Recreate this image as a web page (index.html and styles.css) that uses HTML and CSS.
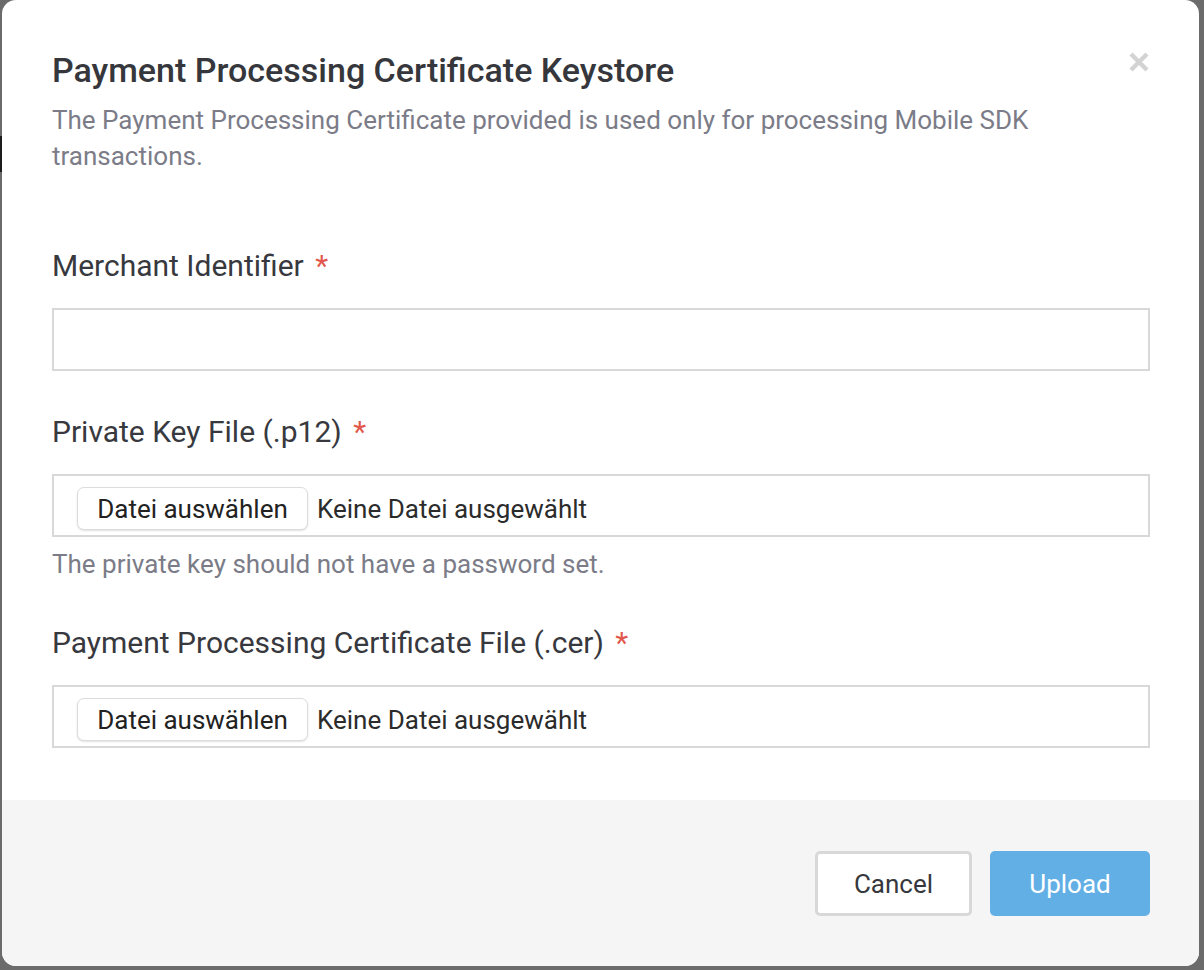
FILE: index.html
```html
<!DOCTYPE html>
<html lang="en">
<head>
<meta charset="utf-8">
<title>Payment Processing Certificate Keystore</title>
<link rel="stylesheet" href="styles.css">
</head>
<body>
<div class="backdrop-mark"></div>
<div class="modal">
  <div class="modal-body">
    <div class="modal-header">
      <div class="header-text">
        <h1 class="modal-title">Payment Processing Certificate Keystore</h1>
        <p class="modal-desc">The Payment Processing Certificate provided is used only for processing Mobile SDK transactions.</p>
      </div>
      <button class="close-btn" aria-label="Close">
        <svg width="22" height="22" viewBox="0 0 22 22"><path d="M3 3 L19 19 M19 3 L3 19" stroke="#d3d3d3" stroke-width="4.4" stroke-linecap="butt"/></svg>
      </button>
    </div>

    <div class="form-group first">
      <label class="field-label">Merchant Identifier <span class="req">*</span></label>
      <div class="input-box"></div>
    </div>

    <div class="form-group">
      <label class="field-label">Private Key File (.p12) <span class="req">*</span></label>
      <div class="input-box file-box">
        <span class="file-btn">Datei auswählen</span>
        <span class="file-name">Keine Datei ausgewählt</span>
      </div>
      <p class="help-text">The private key should not have a password set.</p>
    </div>

    <div class="form-group">
      <label class="field-label">Payment Processing Certificate File (.cer) <span class="req">*</span></label>
      <div class="input-box file-box">
        <span class="file-btn">Datei auswählen</span>
        <span class="file-name">Keine Datei ausgewählt</span>
      </div>
    </div>
  </div>
  <div class="modal-footer">
    <button class="btn btn-cancel">Cancel</button>
    <button class="btn btn-upload">Upload</button>
  </div>
</div>
</body>
</html>
```

FILE: styles.css
```css
html, body {
  margin: 0;
  padding: 0;
}
body {
  background: #6b6b6b;
  width: 1204px;
  height: 970px;
  overflow: hidden;
  position: relative;
  font-family: Roboto, "Liberation Sans", sans-serif;
}
.backdrop-mark {
  position: absolute;
  left: 0;
  top: 136px;
  width: 2px;
  height: 36px;
  background: #1c1c1c;
}
.modal {
  margin-left: 2px;
  width: 1197px;
  height: 966px;
  background: #fff;
  border-radius: 14px;
  display: flex;
  flex-direction: column;
  overflow: hidden;
}
.modal-body {
  padding: 50px 49px 0 50px;
  flex: 1;
}
.modal-header {
  display: flex;
  justify-content: space-between;
  align-items: flex-start;
}
.modal-title {
  margin: 0;
  font-size: 34px;
  font-weight: 500;
  color: #36373c;
  line-height: 40px;
}
.modal-desc {
  margin: 12px 0 0;
  font-size: 26px;
  line-height: 36px;
  color: #7b7c88;
  max-width: 1040px;
}
.close-btn {
  border: 0;
  background: none;
  padding: 0;
  margin: 1px 0 0 0;
  width: 22px;
  height: 22px;
  display: flex;
}
.form-group {
  margin-top: 43px;
}
.form-group.first {
  margin-top: 74px;
}
.field-label {
  display: block;
  font-size: 30px;
  line-height: 36px;
  color: #38393e;
  margin-bottom: 24px;
}
.req {
  color: #e2574c;
  margin-left: 4px;
}
.input-box {
  height: 63px;
  box-sizing: border-box;
  border: 2px solid #d8d8d8;
}
.file-box {
  display: flex;
  align-items: center;
  padding-left: 23px;
  padding-top: 6px;
}
.file-btn {
  box-sizing: border-box;
  height: 43px;
  width: 231px;
  justify-content: center;
  display: flex;
  align-items: center;
  border: 1px solid #dcdcdc;
  border-radius: 7px;
  box-shadow: 0 1px 2px rgba(0,0,0,0.12);
  background: #fff;
  font-size: 26px;
  color: #222;
}
.file-name {
  margin-left: 9px;
  font-size: 26px;
  color: #2b2b2b;
}
.help-text {
  margin: 9px 0 0;
  font-size: 26px;
  line-height: 36px;
  color: #7b7c88;
}
.modal-footer {
  background: #f5f5f5;
  height: 166px;
  box-sizing: border-box;
  padding: 51px 49px 0 0;
  display: flex;
  justify-content: flex-end;
  gap: 18px;
}
.btn {
  height: 65px;
  box-sizing: border-box;
  font-family: Roboto, "Liberation Sans", sans-serif;
  font-size: 26px;
}
.btn-cancel {
  width: 157px;
  background: #fff;
  border: 3px solid #d8d8d8;
  border-radius: 5px;
  color: #37383d;
}
.btn-upload {
  width: 160px;
  background: #62afe6;
  border: 0;
  border-radius: 5px;
  color: #fff;
}
```
